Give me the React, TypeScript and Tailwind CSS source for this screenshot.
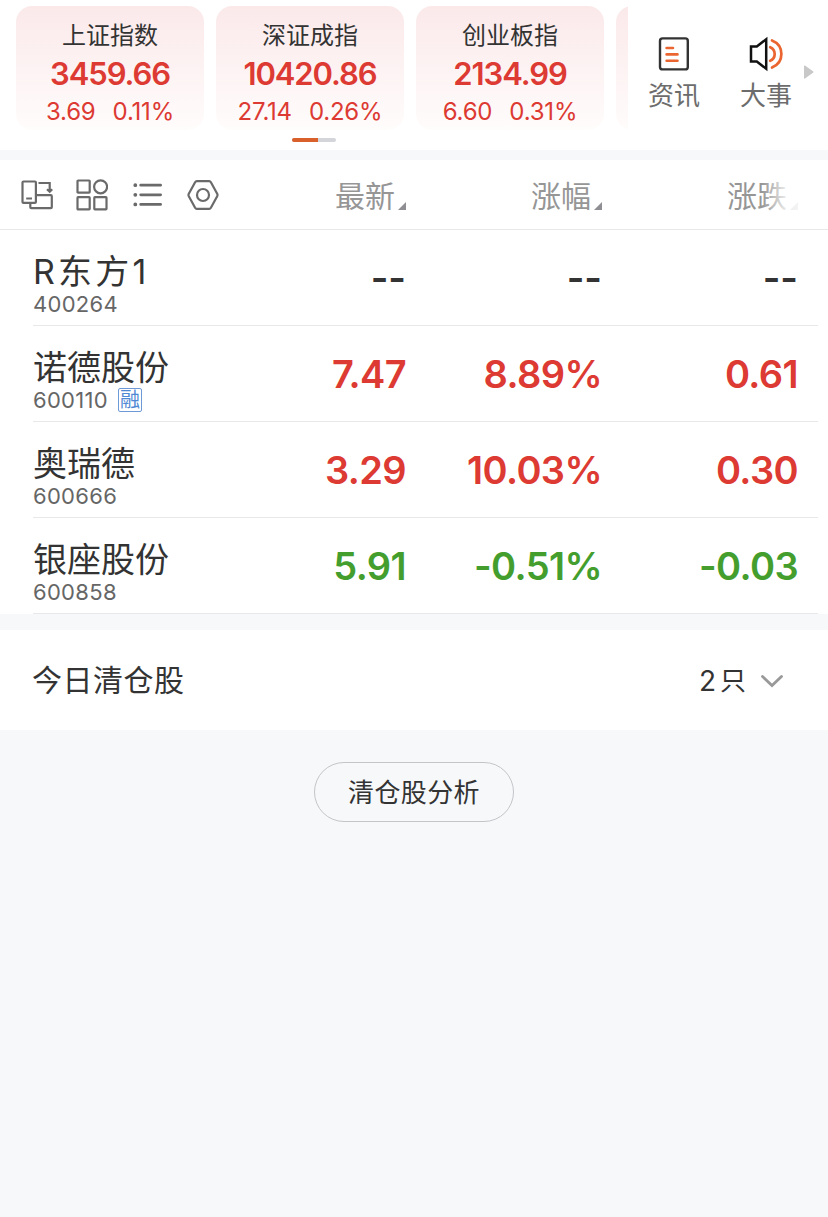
import React from 'react';

const indexes = [
  { name: '上证指数', value: '3459.66', change: '3.69', percent: '0.11%' },
  { name: '深证成指', value: '10420.86', change: '27.14', percent: '0.26%' },
  { name: '创业板指', value: '2134.99', change: '6.60', percent: '0.31%' },
];

const stocks = [
  {
    name: 'R东方1',
    code: '400264',
    cells: ['--', '--', '--'],
    spacing: 'tracking-[3.2px]',
    color: 'text-[#333333]',
  },
  {
    name: '诺德股份',
    code: '600110',
    tag: '融',
    cells: ['7.47', '8.89%', '0.61'],
    color: 'tracking-[-0.6px] text-[#dc3a32]',
  },
  {
    name: '奥瑞德',
    code: '600666',
    cells: ['3.29', '10.03%', '0.30'],
    color: 'tracking-[-0.6px] text-[#dc3a32]',
  },
  {
    name: '银座股份',
    code: '600858',
    cells: ['5.91', '-0.51%', '-0.03'],
    color: 'tracking-[-0.6px] text-[#449e2e]',
  },
];

function NewsIcon() {
  return (
    <svg width="36" height="36" viewBox="0 0 36 36" fill="none" strokeLinecap="round">
      <rect x="4" y="2.4" width="27.8" height="31" rx="2.5" stroke="#333" strokeWidth="2.4" />
      <path d="M10.6 12H17M10.6 18.4H21.5M10.6 24.8H21.5" stroke="#ea6530" strokeWidth="2.6" />
    </svg>
  );
}

function EventIcon() {
  return (
    <svg width="36" height="36" viewBox="0 0 36 36" fill="none">
      <path d="M3 10.5H8.8L18.2 3.2V32.8L8.8 25.5H3Z" stroke="#111" strokeWidth="2.5" />
      <path
        d="M22.2 11.2C28.2 13.8 28.2 22.2 22.2 24.8M24 4.5C36.5 9.5 36.5 26.5 24 31.5"
        stroke="#ea6530"
        strokeWidth="2.7"
        strokeLinecap="round"
      />
    </svg>
  );
}

function RotateIcon() {
  return (
    <svg width="32" height="32" viewBox="0 0 32 32" fill="none" stroke="#6a6a6a" strokeWidth="2.2">
      <rect x="1.5" y="2.5" width="13.4" height="21.4" rx="1" />
      <path d="M5.2 19.5H11M17.5 4H28.7V11.5M26 10.2L28.7 12.8L31.2 10.2" />
      <path d="M15 16.2H29.8Q30.8 16.2 30.8 17.2V28.2Q30.8 29.2 29.8 29.2H10.3Q9.3 29.2 9.3 28.2V24" />
    </svg>
  );
}

function GridIcon() {
  return (
    <svg width="32" height="32" viewBox="0 0 32 32" fill="none" stroke="#6a6a6a" strokeWidth="2.2">
      <rect x="1.5" y="1.5" width="12.2" height="12.2" rx="0.6" />
      <circle cx="24.6" cy="7.8" r="6.5" />
      <rect x="1.5" y="18.2" width="12.2" height="12.2" rx="0.6" />
      <rect x="18.3" y="18.2" width="12.2" height="12.2" rx="0.6" />
    </svg>
  );
}

function ListIcon() {
  return (
    <svg width="32" height="32" viewBox="0 0 32 32" fill="none" stroke="#6a6a6a" strokeLinecap="round">
      <path d="M8.7 6.2H28.6M8.7 15.8H28.6M8.7 25.4H28.6" strokeWidth="2.8" />
      <path d="M3.3 6.2H3.31M3.3 15.8H3.31M3.3 25.4H3.31" strokeWidth="3.8" />
    </svg>
  );
}

function SettingIcon() {
  return (
    <svg width="32" height="32" viewBox="0 0 32 32" fill="none" stroke="#6a6a6a" strokeWidth="2.2">
      <path d="M9.8 2.2H22.2Q23.3 2.2 23.9 3.2L30.2 14.8Q30.8 16 30.2 17.2L23.9 28.8Q23.3 29.8 22.2 29.8H9.8Q8.7 29.8 8.1 28.8L1.8 17.2Q1.2 16 1.8 14.8L8.1 3.2Q8.7 2.2 9.8 2.2Z" />
      <circle cx="16" cy="16" r="6" />
    </svg>
  );
}

function ColumnTitle({ label, faded }: { label: string; faded?: boolean }) {
  return (
    <div className="relative flex w-[196px] shrink-0 justify-end pt-[3px]">
      <span className="pr-[11px] text-[30px] leading-9 text-[#969696]">{label}</span>
      <svg
        width="8"
        height="8"
        viewBox="0 0 8 8"
        className="absolute right-0 bottom-1"
        fill="#8e8e93"
      >
        <path d="M8 0V8H0Z" />
      </svg>
      {faded && (
        <div className="absolute top-0 right-0 h-10 w-9 bg-linear-to-r from-white/0 via-white/85 via-70% to-white/90" />
      )}
    </div>
  );
}

export default function App() {
  return (
    <div className="min-h-[1217px] w-[828px] overflow-hidden bg-[#f7f8fa] font-[Inter,'Noto_Sans_CJK_SC',sans-serif] text-[#333333]">
      <div className="flex h-[150px] bg-white">
        <div className="w-[628px] overflow-hidden pt-1.5 pl-4">
          <div className="flex gap-3">
            {indexes.map((item) => (
              <div
                key={item.name}
                className="flex h-[124px] w-[188px] shrink-0 flex-col items-center rounded-2xl bg-linear-to-b from-[#fbe9ea] to-[#fffcfc] pt-3.5"
              >
                <p className="text-2xl leading-8">{item.name}</p>
                <p className="mt-1.5 text-[31px] leading-8 font-semibold tracking-[-1.1px] text-[#dc3a32]">
                  {item.value}
                </p>
                <div className="mt-2 flex gap-[17px] text-2xl leading-7 tracking-[-0.2px] text-[#dc3a32]">
                  <span>{item.change}</span>
                  <span>{item.percent}</span>
                </div>
              </div>
            ))}
            <div className="h-[124px] w-[188px] shrink-0 rounded-2xl bg-linear-to-b from-[#fbe9ea] to-[#fffcfc]" />
          </div>
          <div className="mt-2 ml-[276px] flex h-1 w-11 overflow-hidden rounded-full bg-[#d4d5da]">
            <div className="w-[26px] bg-[#d95f2b]" />
          </div>
        </div>
        <div className="flex flex-1 text-[26px] leading-8 text-[#6c6c6c]">
          <div className="flex w-[92px] flex-col items-center pt-9">
            <NewsIcon />
            <span className="mt-2">资讯</span>
          </div>
          <div className="flex w-[92px] flex-col items-center pt-9">
            <EventIcon />
            <span className="mt-2">大事</span>
          </div>
          <svg width="10" height="14" viewBox="0 0 10 14" className="mt-[65px] -ml-2" fill="#c8c8c8">
            <path d="M0 1Q0 0 1 .6L9 6.2Q10 7 9 7.8L1 13.4Q0 14 0 13Z" />
          </svg>
        </div>
      </div>

      <div className="mt-2.5 flex h-[70px] items-center border-b border-[#e8e8ea] bg-white pr-[30px] pl-[21px]">
        <div className="flex w-0 flex-1 gap-[23.4px] *:shrink-0">
          <RotateIcon />
          <GridIcon />
          <ListIcon />
          <SettingIcon />
        </div>
        <ColumnTitle label="最新" />
        <ColumnTitle label="涨幅" />
        <ColumnTitle label="涨跌" faded />
      </div>

      <div className="bg-white pr-2.5 pl-[33px]">
        {stocks.map((stock) => (
          <div key={stock.code} className="flex h-24 border-b border-[#e8e8ea] pr-5">
            <div className="flex-1 pt-[21px]">
              <p className={`text-[34px] leading-[42px] ${stock.spacing ?? ''}`}>{stock.name}</p>
              <div className="-mt-px flex h-6 items-center text-[22px] leading-6 tracking-[0.3px] text-[#666666]">
                {stock.code}
                {stock.tag && (
                  <span className="ml-2.5 flex h-6 w-6 items-center justify-center rounded-xs border border-[#6d9ad6] text-xl leading-5 tracking-normal text-[#4f88d4]">
                    {stock.tag}
                  </span>
                )}
              </div>
            </div>
            {stock.cells.map((cell, index) => (
              <p
                key={index}
                className={`w-[196px] pt-[25px] text-right text-[38px] leading-[46px] font-semibold ${stock.color}`}
              >
                {cell}
              </p>
            ))}
          </div>
        ))}
      </div>

      <div className="mt-4 flex h-[100px] items-center justify-between bg-white pt-px pr-11 pl-8">
        <span className="text-[30px] tracking-[0.5px]">今日清仓股</span>
        <div className="flex items-center text-[28px]">
          <span>2</span>
          <span className="ml-1 text-[26px]">只</span>
          <svg width="24" height="14" viewBox="0 0 24 14" className="ml-3.5" fill="none">
            <path
              d="M2.5 2.5L12 11.5L21.5 2.5"
              stroke="#999"
              strokeWidth="2.8"
              strokeLinecap="round"
            />
          </svg>
        </div>
      </div>

      <button className="mx-auto mt-8 flex h-[60px] w-[200px] items-center justify-center rounded-full border border-[#c4c5c8] text-[26px] tracking-[0.4px]">
        清仓股分析
      </button>
    </div>
  );
}
